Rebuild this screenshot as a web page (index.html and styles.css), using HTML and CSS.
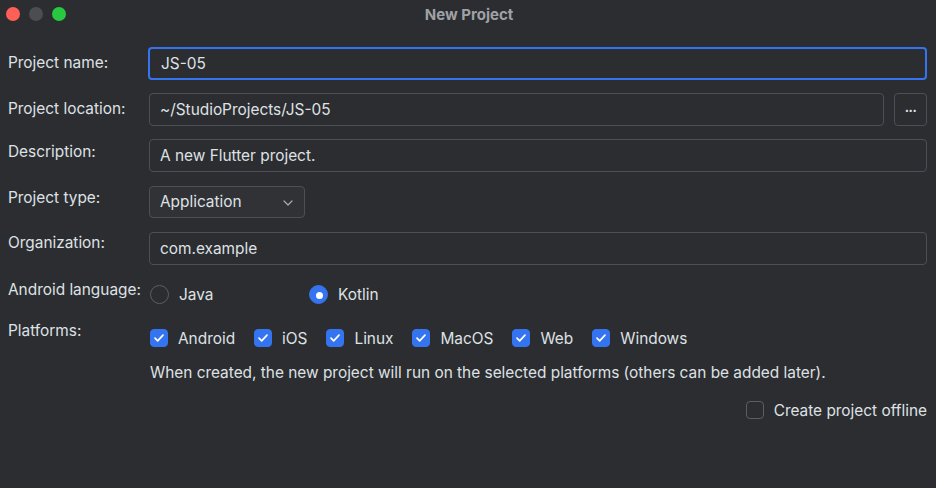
FILE: index.html
```html
<!DOCTYPE html>
<html lang="en">
<head>
<meta charset="utf-8">
<title>New Project</title>
<link rel="stylesheet" href="styles.css">
</head>
<body>
<div class="window">
  <header class="titlebar">
    <div class="lights">
      <span class="light red"></span>
      <span class="light gray"></span>
      <span class="light green"></span>
    </div>
    <div class="title">New Project</div>
  </header>

  <main class="form">
    <div class="row r-name">
      <label class="lbl pt7">Project name:</label>
      <div class="field focused">JS-05</div>
    </div>
    <div class="row r-gap">
      <label class="lbl pt7">Project location:</label>
      <div class="field-group">
        <div class="field grow">~/StudioProjects/JS-05</div>
        <div class="btn-browse">...</div>
      </div>
    </div>
    <div class="row r-gap">
      <label class="lbl pt4">Description:</label>
      <div class="field">A new Flutter project.</div>
    </div>
    <div class="row r-gap14">
      <label class="lbl pt3">Project type:</label>
      <div class="dropdown">
        <span>Application</span>
        <svg class="chev" width="10" height="6" viewBox="0 0 10 6"><path d="M1 1l4 4 4-4" fill="none" stroke="#a8abb0" stroke-width="1.2" stroke-linecap="round" stroke-linejoin="round"/></svg>
      </div>
    </div>
    <div class="row r-gap14">
      <label class="lbl pt2">Organization:</label>
      <div class="field org">com.example</div>
    </div>
    <div class="row r-lang">
      <label class="lbl">Android language:</label>
      <div class="radios">
        <div class="radio-item java"><span class="radio"></span><span>Java</span></div>
        <div class="radio-item"><span class="radio on"></span><span>Kotlin</span></div>
      </div>
    </div>
    <div class="row r-plat">
      <label class="lbl">Platforms:</label>
      <div class="checks">
        <div class="check-item"><span class="cb on"><svg viewBox="0 0 18 18"><path d="M4.5 9.2l3 3 6-6.4"/></svg></span><span>Android</span></div>
        <div class="check-item"><span class="cb on"><svg viewBox="0 0 18 18"><path d="M4.5 9.2l3 3 6-6.4"/></svg></span><span>iOS</span></div>
        <div class="check-item"><span class="cb on"><svg viewBox="0 0 18 18"><path d="M4.5 9.2l3 3 6-6.4"/></svg></span><span>Linux</span></div>
        <div class="check-item"><span class="cb on"><svg viewBox="0 0 18 18"><path d="M4.5 9.2l3 3 6-6.4"/></svg></span><span>MacOS</span></div>
        <div class="check-item"><span class="cb on"><svg viewBox="0 0 18 18"><path d="M4.5 9.2l3 3 6-6.4"/></svg></span><span>Web</span></div>
        <div class="check-item"><span class="cb on"><svg viewBox="0 0 18 18"><path d="M4.5 9.2l3 3 6-6.4"/></svg></span><span>Windows</span></div>
      </div>
    </div>
    <div class="row r-help">
      <div class="lbl"></div>
      <div class="help">When created, the new project will run on the selected platforms (others can be added later).</div>
    </div>
    <div class="offline">
      <div class="check-item"><span class="cb"></span><span>Create project offline</span></div>
    </div>
  </main>
</div>
</body>
</html>
```

FILE: styles.css
```css
* { box-sizing: border-box; }
html, body {
  margin: 0;
  padding: 0;
  background: #2b2d30;
}
body {
  font-family: Inter, "Noto Sans", sans-serif;
  font-size: 15.4px;
  color: #dfe1e5;
  width: 936px;
  height: 488px;
  overflow: hidden;
}
.window {
  width: 936px;
  height: 488px;
}
.titlebar {
  position: relative;
  height: 28px;
  display: flex;
  align-items: center;
  justify-content: center;
}
.lights {
  position: absolute;
  left: 6px;
  top: 7px;
  display: flex;
  gap: 9px;
}
.light {
  width: 14px;
  height: 14px;
  border-radius: 50%;
  display: block;
}
.light.red { background: #fe5f57; }
.light.gray { background: #4b4d51; }
.light.green { background: #28c840; }
.title {
  font-weight: 700;
  font-size: 15px;
  color: #9fa1a6;
  margin-left: 2px;
}
.form {
  padding: 19px 9px 0 8px;
}
.row {
  display: flex;
  align-items: flex-start;
}
.r-gap { margin-top: 13px; }
.r-gap14 { margin-top: 14px; }
.lbl {
  width: 140px;
  flex: none;
  line-height: 18px;
  white-space: nowrap;
}
.pt7 { padding-top: 7px; }
.pt4 { padding-top: 4px; }
.pt3 { padding-top: 3px; }
.pt2 { padding-top: 2px; }
.field {
  flex: 1;
  height: 33px;
  border: 1px solid #4c4f55;
  border-radius: 4px;
  padding: 0 10px;
  line-height: 31px;
  margin-left: 1px;
  background: #2b2d30;
}
.field.focused {
  border: 2px solid #3574f0;
  margin-left: 0;
  padding: 0 10px 0 11px;
  line-height: 29px;
}
.field.org { height: 33px; }
.field-group {
  flex: 1;
  display: flex;
  gap: 10px;
}
.field-group .field { flex: 1; }
.btn-browse {
  width: 33px;
  height: 33px;
  border: 1px solid #4c4f55;
  border-radius: 4px;
  text-align: center;
  line-height: 26px;
  font-size: 13px;
  font-weight: 700;
  letter-spacing: -0.5px;
}
.dropdown {
  margin-left: 1px;
  width: 156px;
  height: 32px;
  border: 1px solid #4c4f55;
  border-radius: 4px;
  background: #303236;
  display: flex;
  align-items: center;
  justify-content: space-between;
  padding: 0 11px 0 10px;
  line-height: 30px;
}
.chev { display: block; margin-top: 1px; }
.r-lang {
  margin-top: 16px;
}
.radios {
  display: flex;
  padding-top: 3px;
  margin-left: 2px;
}
.radio-item {
  display: flex;
  align-items: center;
  gap: 10px;
  height: 20px;
}
.radio-item.java { width: 159px; }
.radio {
  width: 19px;
  height: 19px;
  border-radius: 50%;
  border: 1px solid #5a5d63;
  display: block;
  flex: none;
}
.radio.on {
  background: #3574f0;
  border-color: #3574f0;
  position: relative;
}
.radio.on::after {
  content: "";
  position: absolute;
  left: 6px;
  top: 6px;
  width: 7px;
  height: 7px;
  border-radius: 50%;
  background: #ffffff;
}
.r-plat {
  margin-top: 18px;
}
.checks {
  display: flex;
  gap: 19px;
  padding-top: 7px;
  margin-left: 2px;
}
.check-item {
  display: flex;
  align-items: center;
  gap: 10px;
  height: 18px;
}
.cb {
  width: 18px;
  height: 18px;
  border-radius: 4px;
  border: 1px solid #5a5d63;
  display: block;
  flex: none;
}
.cb.on {
  background: #3574f0;
  border-color: #3574f0;
}
.cb svg {
  display: block;
  width: 16px;
  height: 16px;
}
.cb svg path {
  fill: none;
  stroke: #ffffff;
  stroke-width: 1.9;
  stroke-linecap: round;
  stroke-linejoin: round;
}
.r-help {
  margin-top: 17px;
}
.help {
  margin-left: 2px;
  line-height: 18px;
}
.offline {
  display: flex;
  justify-content: flex-end;
  margin-top: 19px;
  padding-right: 0;
}
```
